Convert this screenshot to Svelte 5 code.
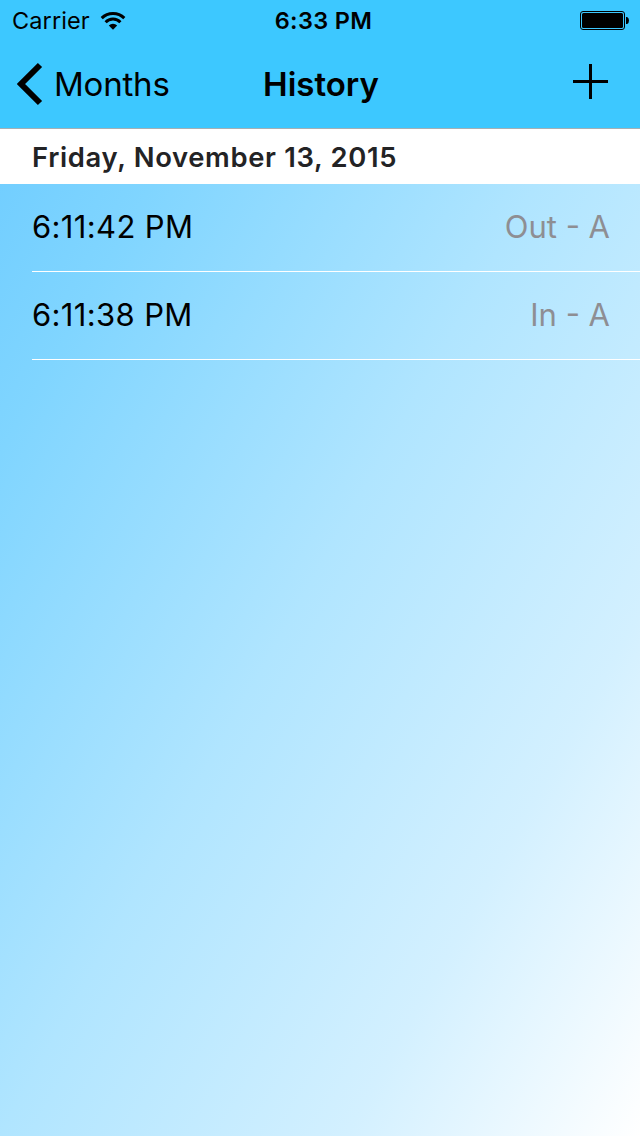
<script lang="ts">
	type Punch = { time: string; detail: string };

	let carrier = "Carrier";
	let clock = "6:33 PM";
	let day = "Friday, November 13, 2015";
	let punches: Punch[] = [
		{ time: "6:11:42 PM", detail: "Out - A" },
		{ time: "6:11:38 PM", detail: "In - A" }
	];
</script>

<div class="screen">
	<header>
		<div class="status">
			<div class="carrier">
				<span>{carrier}</span>
				<svg class="wifi" width="26" height="20" viewBox="0 0 26 20" aria-hidden="true">
					<path d="M1.7 7.1a16 16 0 0 1 22.6 0" />
					<path d="M5.6 11.2a10.4 10.4 0 0 1 14.8 0" />
					<path class="dot" d="M8.8 14.4a6.2 6.2 0 0 1 8.4 0L13 18.8z" />
				</svg>
			</div>
			<span class="clock">{clock}</span>
			<svg class="battery" width="50" height="19" viewBox="0 0 50 19" aria-hidden="true">
				<rect class="shell" x="0.5" y="0.5" width="44" height="18" rx="2.5" />
				<rect x="2" y="2" width="41" height="15" rx="1.5" />
				<path d="M46 6h1.2q1.8 1 1.8 3.5t-1.8 3.5H46z" />
			</svg>
		</div>
		<nav>
			<button class="back">
				<svg width="26" height="44" viewBox="0 0 26 44" aria-hidden="true">
					<path d="M23 3 4 22l19 19" />
				</svg>
				<span>Months</span>
			</button>
			<h1>History</h1>
			<button class="add" aria-label="Add">
				<svg width="35" height="35" viewBox="0 0 35 35" aria-hidden="true">
					<path d="M17.5 0v35M0 17.5h35" />
				</svg>
			</button>
		</nav>
	</header>

	<h2>{day}</h2>
	<ul>
		{#each punches as punch (punch.time)}
			<li>
				<span class="time">{punch.time}</span>
				<span class="detail">{punch.detail}</span>
			</li>
		{/each}
	</ul>
</div>

<style>
	:global(body) {
		margin: 0;
	}

	.screen {
		width: 640px;
		height: 1136px;
		overflow: hidden;
		font-family: Inter, "Liberation Sans", sans-serif;
		color: #000;
		background: linear-gradient(to bottom right, #69caff 0%, #80d5ff 20%, #b0e5ff 50%, #d3f0ff 77%, #fff 100%);
	}

	header {
		box-sizing: border-box;
		height: 129px;
		background: #3dc8ff;
		border-bottom: 1px solid #a5b0b5;
	}

	.status,
	nav {
		display: grid;
		grid-template-columns: 1fr auto 1fr;
		align-items: center;
	}

	.status {
		height: 41px;
		padding: 0 10px 0 12px;
		font-size: 23.5px;
		letter-spacing: 0.1px;
	}

	.carrier {
		display: flex;
		align-items: center;
		gap: 10px;
	}

	.wifi {
		fill: none;
		stroke: #000;
		stroke-width: 3;
	}

	.wifi .dot {
		fill: #000;
		stroke: none;
	}

	.clock {
		margin-left: 5px;
		font-weight: 600;
		letter-spacing: 0.35px;
	}

	.battery {
		justify-self: end;
	}

	.shell {
		fill: none;
		stroke: #000;
	}

	nav {
		height: 86px;
		padding: 0 32px 0 17px;
	}

	button {
		display: flex;
		align-items: center;
		padding: 0;
		border: 0;
		background: none;
		font: inherit;
		color: inherit;
	}

	.back {
		gap: 11px;
		font-size: 33px;
		letter-spacing: -0.2px;
	}

	button svg {
		fill: none;
		stroke: #000;
	}

	.back svg {
		stroke-width: 6;
	}

	.add {
		justify-self: end;
		margin-bottom: 5px;
	}

	.add svg {
		stroke-width: 3;
	}

	h1,
	h2 {
		margin: 0;
		font-weight: 600;
	}

	h1 {
		margin-left: 17px;
		font-size: 33px;
	}

	h2 {
		height: 55px;
		padding-left: 32px;
		background: #fff;
		color: #232325;
		font-size: 27.4px;
		letter-spacing: 0.68px;
		line-height: 57px;
	}

	ul {
		margin: 0;
		padding: 0 0 0 32px;
		list-style: none;
	}

	li {
		display: flex;
		align-items: center;
		justify-content: space-between;
		box-sizing: border-box;
		height: 88px;
		padding: 0 30px 2px 0;
		border-bottom: 1px solid #fff;
		font-size: 31px;
	}

	.time {
		letter-spacing: 0.35px;
	}

	.detail {
		color: #8e8e93;
	}
</style>
